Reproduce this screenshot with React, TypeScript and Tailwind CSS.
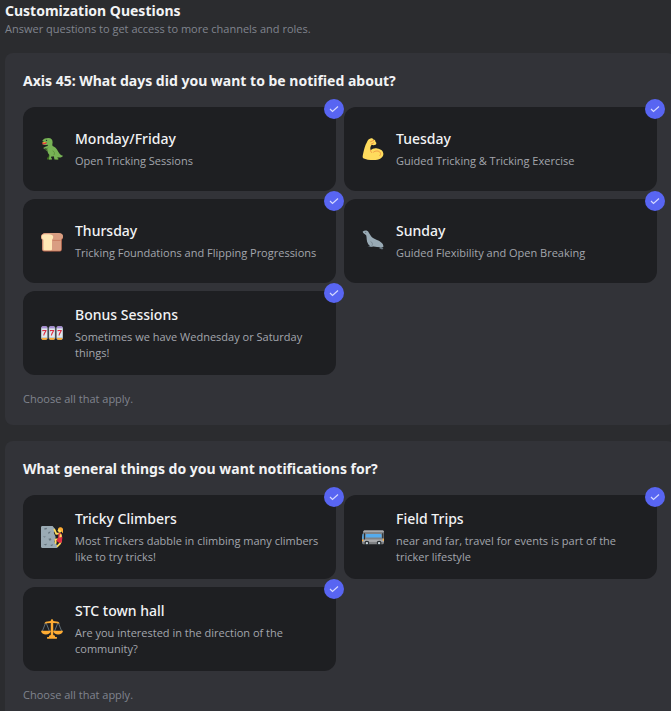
import type { ReactNode } from "react";

function Emoji({ children }: { children: ReactNode }) {
  return (
    <svg viewBox="0 0 36 36" className="size-[22px] shrink-0" aria-hidden="true">
      {children}
    </svg>
  );
}

const TRex = (
  <Emoji>
    <path fill="#3E721D" d="M14 24l-2 8h-2v3h6l2-9zM22 26l2 6v3h5l-3-9z" />
    <path
      fill="#77B255"
      d="M2 5C4 1 8 0 12 0c5 0 7 3 7 7 0 2-1 4 0 6 3 1 7 4 9 9 2 4 4 6 8 7-1 3-6 4-9 2 0 2-1 2-1 2h2v2h-6l-1-5c-3 1-4 0-4 0l-1 3h2v2h-5l1-7c-3-3-4-7-4-11H6l-1 2-1-3 4-2 3-1v-2c-3 1-7 1-9-1l1-1 6-1z"
    />
    <path fill="#DD2E44" d="M2 8l8-1-2 3-5 .5z" />
    <path fill="#FFAC33" d="M2 7l6-.5-1 1.500-4 .5z" />
    <circle cx="9" cy="4" r="1.100" fill="#292F33" />
    <path fill="none" stroke="#5C913B" strokeWidth="1.500" d="M19 21c3 1 4 4 2 7M12 16l-4 2 1 3" />
  </Emoji>
);

const Biceps = (
  <Emoji>
    <path
      fill="#FFDC5D"
      d="M14 1c2-1 4 0 5 2 2 0 3 1 3 3 2 1 2 4 0 5-2 1-4 1-6 0-2 2-3 5-2 9 3-3 7-4 11-3 6 1 10 4 10 9 0 6-7 10-16 10-7 0-13-1-17-3-1.500-1-1-4 0-8 1-5 3-13 6-18 1-3 3-5 6-6z"
    />
    <path
      fill="none"
      stroke="#EF9645"
      strokeWidth="1.600"
      strokeLinecap="round"
      d="M14 20c0 2 1 3 2 4M19 23c4-3 9-2 11 1 1 2 0 4-1 5M15 10l4-2M14 6l5-2"
    />
  </Emoji>
);

const Bread = (
  <Emoji>
    <path fill="#C1694F" d="M8 5h20c5 0 8 3 8 6 0 3-1 4-2 5v16c0 2-1 3-3 3H5c-2 0-3-1-3-3V16c-1-1-2-2-2-5 0-3 3-6 8-6z" />
    <path fill="#D99E82" d="M8 5h20c5 0 8 2 8 5 0 3-1 4-3 5v16c0 2-1 3-3 3H5c-2 0-3-1-3-3V16c-1-1-2-2-2-5 0-3 3-6 8-6z" />
    <path fill="#FFE8B6" d="M8 7h5c4 0 7 2 7 4s-1 4-2 5v15c0 2-1 2-2 2H6c-2 0-2-1-2-2V16c-1-1-3-2-3-5s3-4 7-4z" />
    <path fill="none" stroke="#C1694F" d="M19 17h13" />
  </Emoji>
);

const Seal = (
  <Emoji>
    <path fill="#66757F" d="M14 25c0 2-4 3-8 3h9l4-3zM30 27l5 3-2 2-5-2z" />
    <path
      fill="#99AAB5"
      d="M1 3c3-3 8-3 10 1 2 3 4 7 7 9 4 3 9 3 13 7 3 2 4 4 4 8-5 1-11 0-16-1-5 1-7-1-9-4-3-5-2-10-3-14-2-2-5-3-6-6z"
    />
    <circle cx="6" cy="4" r="1" fill="#66757F" />
    <path fill="none" stroke="#66757F" strokeWidth="1" d="M14 19c3 1 4 4 2 7" />
  </Emoji>
);

const SlotMachine = (
  <Emoji>
    {[0, 12.5, 25].map((x) => (
      <g key={x} transform={`translate(${x} 0)`}>
        <rect x="0" y="7" width="11" height="22" rx="3" fill="#99AAB5" />
        <path fill="#AA8DD8" d="M3 7h5c1 0 2 1 2 4H1c0-3 1-4 2-4z" />
        <path fill="#FFAC33" d="M3 29h5c1 0 2-1 2-3H1c0 2 1 3 2 3z" />
        <rect x="1" y="10.500" width="9" height="15" fill="#E1E8ED" />
        <path fill="none" stroke="#DD2E44" strokeWidth="1.800" d="M3 15v-1h5c-1 3-3 4-3.500 8" />
      </g>
    ))}
  </Emoji>
);

const Climber = (
  <Emoji>
    <path fill="#9AAAB4" d="M2 0h17l4 5-2 6 3 7-2 8 4 5 1 5H2c-1 0-2-1-2-2V2C0 1 1 0 2 0z" />
    <path fill="#66757F" d="M5 4l4-1 1 2-4 1zM12 10l4-1-2 3-2 1zM3 17h5l-2 2zM12 21l4-1 1 3-3 1zM4 30l6-1-2 3zM15 31l5-1-2 3z" />
    <path
      fill="none"
      stroke="#FFDC5D"
      strokeWidth="3"
      strokeLinecap="round"
      strokeLinejoin="round"
      d="M31 12l-6 1-3-7M29 22l-5 0 0 6M33 24l-2 5-4 4"
    />
    <path fill="#DD2E44" d="M29 11l4 1 2 7-1 8-4 1-5-4 3-5z" />
    <circle cx="31" cy="7" r="3.500" fill="#FFDC5D" />
    <path fill="#FFAC33" d="M28 4c2-3 7-2 8 1 1 4 0 6-1 7-1-4-3-5-7-8z" />
    <path fill="#FFDC5D" d="M31 13l3 1v4l-4 1z" />
  </Emoji>
);

const Minibus = (
  <Emoji>
    <path fill="#808285" d="M4 8h29c2 0 3 1 3 3v16c0 2-1 3-3 3H3c-2 0-3-1-3-3v-8L2 9z" />
    <path fill="#A7A9AC" d="M1 22h35v4H1z" />
    <path fill="#A7A9AC" d="M5 7h28c2 0 3 1 3 3H2c0-2 1-3 3-3z" />
    <path fill="#55ACEE" d="M8 13h22c1 0 2 1 2 2v4H6v-4c0-1 1-2 2-2zM1 13h2v8H0z" />
    <path fill="#292F33" d="M3 12h2v10H3zM33 12h2v8h-2z" />
    <circle cx="8" cy="28" r="4" fill="#292F33" />
    <circle cx="28" cy="28" r="4" fill="#292F33" />
    <circle cx="8" cy="28" r="2" fill="#CCD6DD" />
    <circle cx="28" cy="28" r="2" fill="#CCD6DD" />
    <path fill="#FFAC33" d="M0 22h2v3H0zM34 21h2v3h-2z" />
  </Emoji>
);

const Scales = (
  <Emoji>
    <path fill="none" stroke="#66757F" strokeWidth="1.500" d="M8 7L2 22M8 7l6 15M28 7l-6 15M28 7l6 15" />
    <path
      fill="#FFAC33"
      d="M16 4a2 2 0 1 1 4 0v1l8 1 3 3-11-1v20l3 1v2h3v3H10v-3h3v-2l3-1V8L5 9l3-3 8-1zM0 21h16c0 4-4 6-8 6s-8-2-8-6zM20 21h16c0 4-4 6-8 6s-8-2-8-6z"
    />
  </Emoji>
);

type Option = { title: string; description: string; emoji: ReactNode };

const questions: { title: string; options: Option[] }[] = [
  {
    title: "Axis 45: What days did you want to be notified about?",
    options: [
      { title: "Monday/Friday", description: "Open Tricking Sessions", emoji: TRex },
      { title: "Tuesday", description: "Guided Tricking & Tricking Exercise", emoji: Biceps },
      { title: "Thursday", description: "Tricking Foundations and Flipping Progressions", emoji: Bread },
      { title: "Sunday", description: "Guided Flexibility and Open Breaking", emoji: Seal },
      { title: "Bonus Sessions", description: "Sometimes we have Wednesday or Saturday things!", emoji: SlotMachine },
    ],
  },
  {
    title: "What general things do you want notifications for?",
    options: [
      { title: "Tricky Climbers", description: "Most Trickers dabble in climbing many climbers like to try tricks!", emoji: Climber },
      { title: "Field Trips", description: "near and far, travel for events is part of the tricker lifestyle", emoji: Minibus },
      { title: "STC town hall", description: "Are you interested in the direction of the community?", emoji: Scales },
    ],
  },
];

function OptionCard({ title, description, emoji }: Option) {
  return (
    <label className="relative flex min-h-[84px] cursor-pointer items-center gap-3 rounded-xl bg-[#1e1f22] py-3 pr-4 pl-[18px]">
      {emoji}
      <span className="flex min-w-0 flex-col gap-1">
        <span className="font-['Noto_Sans',sans-serif] text-[14px] leading-5 font-medium text-[#f2f3f5]">{title}</span>
        <span className="text-[11px] leading-4 text-[#a3a6ad]">{description}</span>
      </span>
      <input
        type="checkbox"
        defaultChecked
        className="peer absolute -top-2 -right-2 size-5 cursor-pointer appearance-none rounded-full bg-[#4e5058] checked:bg-[#5865f2]"
      />
      <svg
        viewBox="0 0 20 20"
        className="pointer-events-none absolute -top-2 -right-2 hidden size-5 peer-checked:block"
        aria-hidden="true"
      >
        <path d="M6 10l2.500 2.500L14 7.500" fill="none" stroke="#d5d9ff" strokeWidth="1.200" />
      </svg>
    </label>
  );
}

export default function App() {
  return (
    <main className="h-screen overflow-hidden bg-[#2b2c2f] pt-px pl-[5px] font-['Open_Sans','Noto_Sans',sans-serif]">
      <h1 className="font-['Noto_Sans',sans-serif] text-[14px] leading-5 font-bold text-[#f2f3f5]">
        Customization Questions
      </h1>
      <p className="text-[11px] leading-4 text-[#80848e]">Answer questions to get access to more channels and roles.</p>
      <div className="mt-4 -mr-1 flex flex-col gap-4">
        {questions.map((question) => (
          <fieldset key={question.title} className="min-w-0 rounded-lg bg-[#323338] p-[18px]">
            <legend className="float-left w-full font-['Noto_Sans',sans-serif] text-[14px] leading-5 font-bold text-[#f2f3f5]">
              {question.title}
            </legend>
            <div className="clear-both grid grid-cols-2 gap-2 pt-4">
              {question.options.map((option) => (
                <OptionCard key={option.title} {...option} />
              ))}
            </div>
            <p className="mt-4 text-[11px] leading-4 text-[#80848e]">Choose all that apply.</p>
          </fieldset>
        ))}
      </div>
    </main>
  );
}
